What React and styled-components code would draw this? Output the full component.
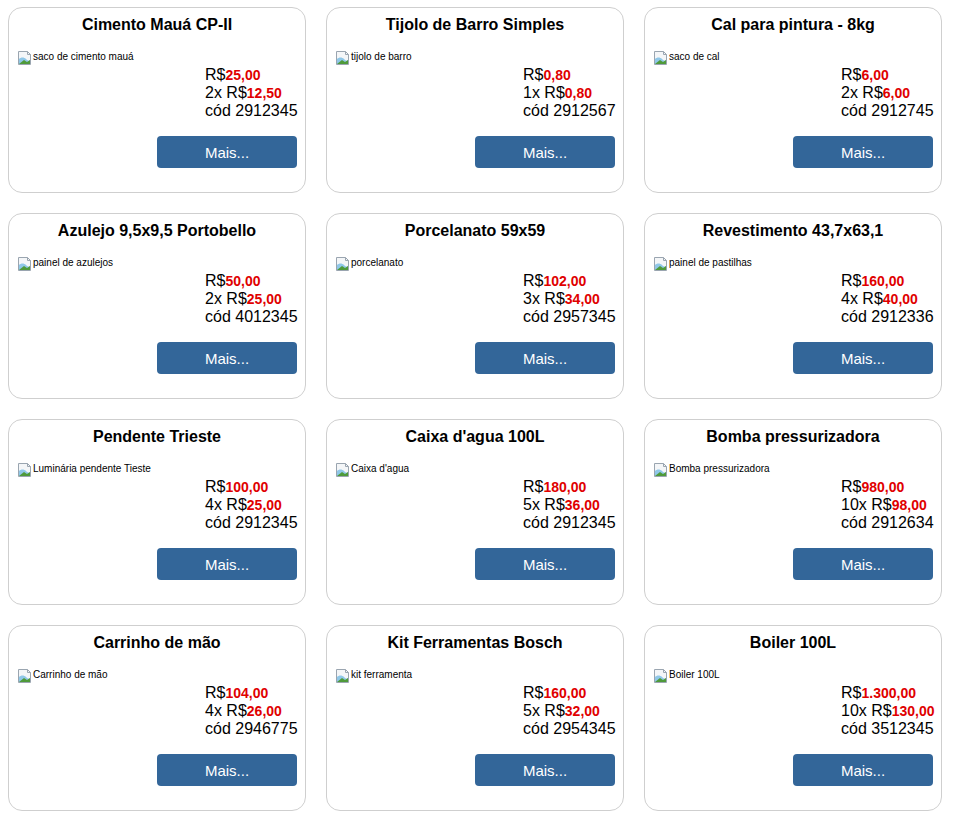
import styled, { createGlobalStyle } from "styled-components";

const produtos = [
  { nome: "Cimento Mauá CP-II", alt: "saco de cimento mauá", preco: "25,00", vezes: 2, parcela: "12,50", cod: "2912345" },
  { nome: "Tijolo de Barro Simples", alt: "tijolo de barro", preco: "0,80", vezes: 1, parcela: "0,80", cod: "2912567" },
  { nome: "Cal para pintura - 8kg", alt: "saco de cal", preco: "6,00", vezes: 2, parcela: "6,00", cod: "2912745" },
  { nome: "Azulejo 9,5x9,5 Portobello", alt: "painel de azulejos", preco: "50,00", vezes: 2, parcela: "25,00", cod: "4012345" },
  { nome: "Porcelanato 59x59", alt: "porcelanato", preco: "102,00", vezes: 3, parcela: "34,00", cod: "2957345" },
  { nome: "Revestimento 43,7x63,1", alt: "painel de pastilhas", preco: "160,00", vezes: 4, parcela: "40,00", cod: "2912336" },
  { nome: "Pendente Trieste", alt: "Luminária pendente Tieste", preco: "100,00", vezes: 4, parcela: "25,00", cod: "2912345" },
  { nome: "Caixa d'agua 100L", alt: "Caixa d'agua", preco: "180,00", vezes: 5, parcela: "36,00", cod: "2912345" },
  { nome: "Bomba pressurizadora", alt: "Bomba pressurizadora", preco: "980,00", vezes: 10, parcela: "98,00", cod: "2912634" },
  { nome: "Carrinho de mão", alt: "Carrinho de mão", preco: "104,00", vezes: 4, parcela: "26,00", cod: "2946775" },
  { nome: "Kit Ferramentas Bosch", alt: "kit ferramenta", preco: "160,00", vezes: 5, parcela: "32,00", cod: "2954345" },
  { nome: "Boiler 100L", alt: "Boiler 100L", preco: "1.300,00", vezes: 10, parcela: "130,00", cod: "3512345" },
];

// icone de imagem quebrada (o navegador mostra quando a foto nao carrega)
const BrokenImg = () => (
  <svg width="16" height="16" viewBox="0 0 16 16">
    <path d="M1.5 1.5h9l3 3v10h-12z" fill="#f4f6f8" stroke="#9aa5b0" />
    <path d="M10.5 1.5v3h3" fill="none" stroke="#9aa5b0" />
    <path d="M2 9c2-2 5-2 7 0s3 2 4 1v4H2z" fill="#8fc7e8" />
    <path d="M2 14l5-4 3 2 3-2v4z" fill="#4f9a3a" />
  </svg>
);

const Produto = ({ p }) => (
  <Card>
    <Titulo>{p.nome}</Titulo>
    <Foto>
      <BrokenImg />
      <span>{p.alt}</span>
    </Foto>
    <Precos>
      <div>
        R$<Valor>{p.preco}</Valor>
      </div>
      <div>
        {p.vezes}x R$<Valor>{p.parcela}</Valor>
      </div>
      <div>cód {p.cod}</div>
    </Precos>
    <Rodape>
      <Botao>Mais...</Botao>
    </Rodape>
  </Card>
);

const App = () => (
  <>
    <GlobalStyle />
    <Grade>
      {produtos.map((p, i) => (
        <Produto key={i} p={p} />
      ))}
    </Grade>
  </>
);
export default App;

const GlobalStyle = createGlobalStyle`
  body {
    margin: 0;
    background: #fff;
    font-family: "Liberation Sans", Arial, sans-serif;
  }
`;
const Grade = styled.div`
  display: grid;
  grid-template-columns: repeat(3, 298px);
  column-gap: 20px;
  row-gap: 20px;
  padding: 7px 8px;
`;
const Card = styled.div`
  box-sizing: border-box;
  height: 186px;
  border: 1px solid #cfcfcf;
  border-radius: 14px;
  padding: 6px 8px 0;
  background: #fff;
`;
const Titulo = styled.h3`
  margin: 2px 0 16px;
  font-size: 16px;
  line-height: 18px;
  font-weight: bold;
  text-align: center;
  color: #000;
`;
const Foto = styled.div`
  display: flex;
  align-items: flex-start;
  height: 16px;
  font-size: 10px;
  line-height: 12px;
  color: #000;
  span {
    margin-top: 1px;
  }
`;
const Precos = styled.div`
  margin-left: 188px;
  font-size: 16px;
  line-height: 18px;
  color: #000;
  white-space: nowrap;
`;
const Valor = styled.span`
  color: #e00000;
  font-weight: bold;
  font-size: 14px;
`;
const Rodape = styled.div`
  display: flex;
  justify-content: flex-end;
  margin-top: 16px;
`;
const Botao = styled.button`
  width: 140px;
  height: 32px;
  border: none;
  border-radius: 4px;
  background: #336699;
  color: #fff;
  font-family: "Liberation Sans", Arial, sans-serif;
  font-size: 15px;
  cursor: pointer;
`;
